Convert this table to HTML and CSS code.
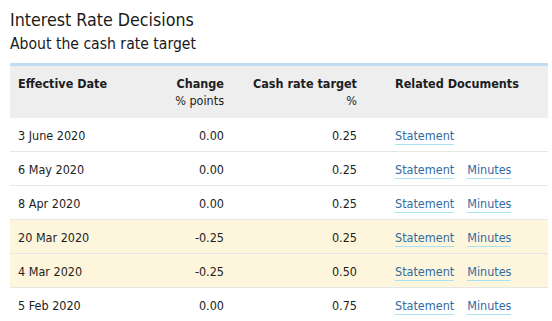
FILE: index.html
```html
<!DOCTYPE html>
<html>
<head>
<meta charset="utf-8">
<link rel="stylesheet" href="styles.css">
</head>
<body>
<div class="page">
  <h1 class="title">Interest Rate Decisions</h1>
  <h2 class="subtitle">About the cash rate target</h2>
  <table class="rates">
    <colgroup>
      <col class="c-date"><col class="c-change"><col class="c-rate"><col class="c-docs">
    </colgroup>
    <thead>
      <tr>
        <th class="left">Effective Date</th>
        <th class="num">Change<span class="unit">% points</span></th>
        <th class="num">Cash rate target<span class="unit">%</span></th>
        <th class="docs">Related Documents</th>
      </tr>
    </thead>
    <tbody>
      <tr>
        <td>3 June 2020</td><td class="num">0.00</td><td class="num">0.25</td>
        <td class="docs"><a href="#">Statement</a></td>
      </tr>
      <tr>
        <td>6 May 2020</td><td class="num">0.00</td><td class="num">0.25</td>
        <td class="docs"><a href="#">Statement</a><a href="#">Minutes</a></td>
      </tr>
      <tr>
        <td>8 Apr 2020</td><td class="num">0.00</td><td class="num">0.25</td>
        <td class="docs"><a href="#">Statement</a><a href="#">Minutes</a></td>
      </tr>
      <tr class="hl">
        <td>20 Mar 2020</td><td class="num">-0.25</td><td class="num">0.25</td>
        <td class="docs"><a href="#">Statement</a><a href="#">Minutes</a></td>
      </tr>
      <tr class="hl">
        <td>4 Mar 2020</td><td class="num">-0.25</td><td class="num">0.50</td>
        <td class="docs"><a href="#">Statement</a><a href="#">Minutes</a></td>
      </tr>
      <tr>
        <td>5 Feb 2020</td><td class="num">0.00</td><td class="num">0.75</td>
        <td class="docs"><a href="#">Statement</a><a href="#">Minutes</a></td>
      </tr>
    </tbody>
  </table>
</div>
</body>
</html>
```
FILE: styles.css
```css
html, body {
  margin: 0;
  padding: 0;
  background: #ffffff;
}
body {
  font-family: "DejaVu Sans Condensed", "DejaVu Sans", sans-serif;
  color: #1d1d1d;
}
.page {
  padding: 9px 4px 0 10px;
}
.title {
  margin: 0;
  font-size: 17.7px;
  font-weight: normal;
  line-height: 22px;
  color: #1a1a1a;
}
.subtitle {
  margin: 2px 0 0 0;
  font-size: 15.6px;
  font-weight: normal;
  line-height: 22px;
  color: #1a1a1a;
}
.rates {
  margin-top: 8px;
  width: 538px;
  border-collapse: collapse;
  table-layout: fixed;
  font-size: 12.5px;
  border-top: 3px solid #bfdcf3;
}
.c-date { width: 130px; }
.c-change { width: 92px; }
.c-rate { width: 133px; }
.c-docs { width: auto; }
.rates thead tr {
  background: #eeeeef;
}
.rates th {
  font-weight: bold;
  vertical-align: top;
  padding: 9px 8px 9px 8px;
  line-height: 17px;
  height: 34px;
  text-align: left;
}
.rates th.num { text-align: right; }
.unit {
  display: block;
  font-weight: normal;
}
.rates td {
  height: 32px;
  padding: 1px 8px 0 8px;
  line-height: 17px;
  border-bottom: 1px solid #e6e6e6;
  vertical-align: middle;
}
.rates tbody tr:last-child td { border-bottom: none; }
.rates td.num { text-align: right; }
.rates .docs { padding-left: 30px; }
.rates tr.hl { background: #fdf6dc; }
.rates a {
  color: #336b9f;
  text-decoration: none;
  border-bottom: 1px solid #a9e2f2;
  padding-bottom: 1px;
  margin-right: 13px;
}
```
